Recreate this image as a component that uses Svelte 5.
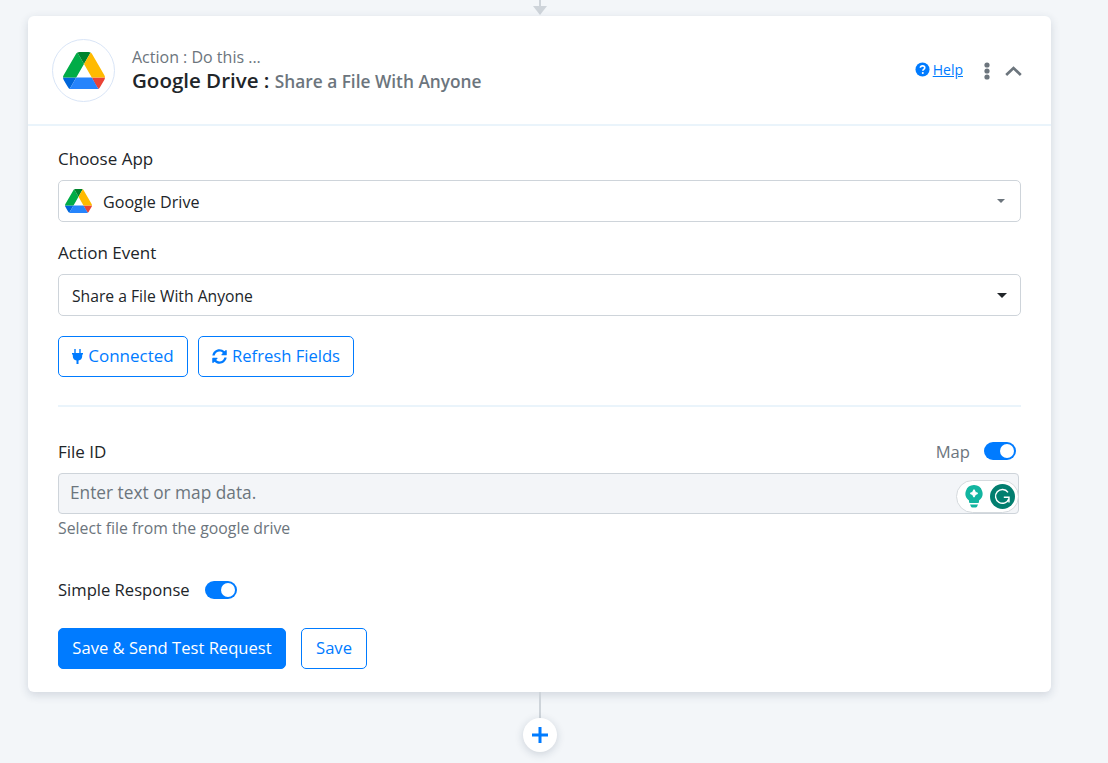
<script lang="ts">
  let fileId = $state("");
</script>

{#snippet driveLogo(size)}
  <svg width={size} height={size * 0.893} viewBox="0 0 87.3 78" aria-hidden="true">
    <path d="m6.6 66.85 3.85 6.65c.8 1.4 1.95 2.5 3.3 3.3l13.75-23.8h-27.5c0 1.55.4 3.1 1.2 4.5z" fill="#0066da" />
    <path d="m43.65 25-13.75-23.8c-1.35.8-2.5 1.9-3.3 3.3l-25.4 44a9.06 9.06 0 0 0 -1.2 4.5h27.5z" fill="#00ac47" />
    <path d="m73.55 76.8c1.35-.8 2.5-1.9 3.3-3.3l1.6-2.75 7.65-13.25c.8-1.4 1.2-2.95 1.2-4.5h-27.502l5.852 11.5z" fill="#ea4335" />
    <path d="m43.65 25 13.75-23.8c-1.35-.8-2.9-1.2-4.5-1.2h-18.5c-1.6 0-3.15.45-4.5 1.2z" fill="#00832d" />
    <path d="m59.8 53h-32.3l-13.75 23.8c1.35.8 2.9 1.2 4.5 1.2h50.8c1.6 0 3.15-.45 4.5-1.2z" fill="#2684fc" />
    <path d="m73.4 26.5-12.7-22c-.8-1.4-1.95-2.5-3.3-3.3l-13.75 23.8 16.15 28h27.45c0-1.55-.4-3.1-1.2-4.5z" fill="#ffba00" />
  </svg>
{/snippet}

<div class="page">
  <div class="flow">
    <div class="connector-top">
      <span class="line"></span>
      <span class="arrow"></span>
    </div>

    <section class="card">
      <header class="head">
        <div class="logo">{@render driveLogo(42)}</div>
        <div class="titles">
          <div class="eyebrow">Action : Do this ...</div>
          <div class="title">Google Drive : <span>Share a File With Anyone</span></div>
        </div>
        <div class="head-actions">
          <a class="help" href="#help">
            <svg width="15" height="15" viewBox="0 0 16 16" aria-hidden="true">
              <circle cx="8" cy="8" r="7.5" fill="#007bff" />
              <path d="M5.7 6.2c.1-1.4 1.1-2.1 2.4-2.1 1.4 0 2.3.8 2.3 1.9 0 1.8-2.1 1.8-2.1 3.3" fill="none" stroke="#fff" stroke-width="1.7" />
              <circle cx="8.3" cy="11.8" r="1.1" fill="#fff" />
            </svg>
            <span>Help</span>
          </a>
          <svg class="dots" width="8" height="18" viewBox="0 0 8 18" aria-hidden="true">
            <circle cx="4" cy="3" r="2.6" />
            <circle cx="4" cy="9" r="2.6" />
            <circle cx="4" cy="15" r="2.6" />
          </svg>
          <svg class="chevron" width="17" height="10" viewBox="0 0 17 10" aria-hidden="true">
            <path d="M1.2 9 8.500 2l7.300 7" fill="none" stroke="#6c757d" stroke-width="2.700" />
          </svg>
        </div>
      </header>

      <div class="body">
        <div class="label">Choose App</div>
        <div class="select">
          <span class="select-logo">{@render driveLogo(27)}</span>
          <span class="app-name">Google Drive</span>
          <span class="caret muted"></span>
        </div>

        <div class="label second">Action Event</div>
        <div class="select plain">
          <span class="event-name">Share a File With Anyone</span>
          <span class="caret"></span>
        </div>

        <div class="actions">
          <button class="btn outline connected">
            <svg width="11" height="15" viewBox="0 0 11 15" aria-hidden="true">
              <path d="M2.3 0h1.4v4h3.6V0h1.4v4H11v1.4h-.8v1.8c0 2.3-1.5 4-3.7 4.4V15h-2v-3.4C2.3 11.2.8 9.5.8 7.2V5.4H0V4h2.3z" fill="#007bff" />
            </svg>
            <span>Connected</span>
          </button>
          <button class="btn outline refresh">
            <svg width="15" height="15" viewBox="0 0 512 512" aria-hidden="true">
              <path d="M370.72 133.28C339.458 104.008 298.888 87.962 255.848 88c-77.458.068-144.328 53.178-162.791 126.85-1.344 5.363-6.122 9.15-11.651 9.15H24.103c-7.498 0-13.194-6.807-11.807-14.176C33.933 94.924 134.813 8 256 8c66.448 0 126.791 26.136 171.315 68.685L463.03 40.97C478.149 25.851 504 36.559 504 57.941V192c0 13.255-10.745 24-24 24H345.941c-21.382 0-32.09-25.851-16.971-40.971l41.75-41.749zM32 296h134.059c21.382 0 32.09 25.851 16.971 40.971l-41.75 41.75c31.262 29.273 71.835 45.319 114.876 45.28 77.418-.07 144.315-53.144 162.787-126.849 1.344-5.363 6.122-9.15 11.651-9.15h57.304c7.498 0 13.194 6.807 11.807 14.176C478.067 417.076 377.187 504 256 504c-66.448 0-126.791-26.136-171.315-68.685L48.97 471.03C33.851 486.149 8 475.441 8 454.059V320c0-13.255 10.745-24 24-24z" fill="#007bff" />
            </svg>
            <span>Refresh Fields</span>
          </button>
        </div>

        <hr />

        <div class="field-head">
          <span class="label">File ID</span>
          <span class="map">
            <span>Map</span>
            <span class="toggle"></span>
          </span>
        </div>
        <div class="input-wrap">
          <input bind:value={fileId} placeholder="Enter text or map data." />
          <div class="grammarly">
            <svg width="18" height="23" viewBox="0 0 18 23" aria-hidden="true">
              <path d="M9 0a8.5 8.5 0 0 1 5 15.4V17a1 1 0 0 1-1 1H5a1 1 0 0 1-1-1v-1.600A8.500 8.500 0 0 1 9 0z" fill="#12b5a0" />
              <path d="M5 19.500h8l-1 2.200a1.500 1.500 0 0 1-1.300.8H7.300a1.500 1.500 0 0 1-1.300-.8z" fill="#12b5a0" />
              <path d="M9 4.500c.5 2.400 1.300 3.300 3.700 3.800-2.400.5-3.200 1.400-3.700 3.800-.5-2.400-1.300-3.300-3.700-3.800 2.400-.5 3.200-1.400 3.700-3.800z" fill="#fff" stroke="#fff" stroke-width="1.200" />
            </svg>
            <svg width="25" height="25" viewBox="0 0 25 25" aria-hidden="true">
              <circle cx="12.500" cy="12.500" r="12.500" fill="#027e6f" />
              <path d="M18 8.300A6.900 6.900 0 1 0 19 14.500M13.800 13.300h5.200v5.200" fill="none" stroke="#fff" stroke-width="1.400" />
            </svg>
          </div>
        </div>
        <div class="hint">Select file from the google drive</div>

        <div class="simple">
          <span class="label">Simple Response</span>
          <span class="toggle"></span>
        </div>

        <div class="actions submit">
          <button class="btn primary">Save &amp; Send Test Request</button>
          <button class="btn outline save">Save</button>
        </div>
      </div>
    </section>

    <div class="connector-bottom">
      <span class="line"></span>
      <button class="add" aria-label="Add step">
        <svg width="16" height="16" viewBox="0 0 16 16" aria-hidden="true">
          <path d="M8 0v16M0 8h16" stroke="#007bff" stroke-width="3" />
        </svg>
      </button>
    </div>
  </div>
</div>

<style>
  :global(body) {
    margin: 0;
    background: #f3f6f9;
    overflow: hidden;
  }

  .page {
    height: 763px;
    padding-left: 28px;
    font-family: "Open Sans", "Noto Sans", sans-serif;
    font-size: 16.6px;
    color: #212529;
    overflow: hidden;
  }

  .flow {
    width: 1023px;
    display: flex;
    flex-direction: column;
    align-items: center;
  }

  .connector-top {
    height: 16px;
    display: flex;
    flex-direction: column;
    align-items: center;
  }

  .connector-top .line {
    width: 2px;
    height: 6px;
    background: #ced4da;
  }

  .connector-top .arrow {
    width: 0;
    height: 0;
    border-left: 7.5px solid transparent;
    border-right: 7.5px solid transparent;
    border-top: 9px solid #ced4da;
  }

  .card {
    width: 100%;
    height: 676px;
    background: #fff;
    border-radius: 6px;
    box-shadow: 0 3px 10px rgba(30, 50, 80, 0.16);
  }

  .head {
    height: 108px;
    box-sizing: content-box;
    border-bottom: 2px solid #eaf4fb;
    padding: 0 29px 0 24px;
    display: flex;
    align-items: center;
    gap: 17px;
  }

  .logo {
    width: 61px;
    height: 61px;
    border: 1px solid #d9e5f7;
    border-radius: 50%;
    display: flex;
    align-items: center;
    justify-content: center;
    margin-top: 1px;
  }

  .titles {
    margin-top: 2px;
  }

  .eyebrow {
    color: #6c757d;
    font-size: 16px;
    line-height: 20px;
  }

  .title {
    font-size: 20.500px;
    font-weight: 600;
    line-height: 27px;
    color: #212529;
  }

  .title span {
    font-size: 17.300px;
    color: #6c757d;
  }

  .head-actions {
    margin-left: auto;
    margin-top: 2px;
    display: flex;
    align-items: center;
  }

  .help {
    display: flex;
    align-items: center;
    gap: 3px;
    color: #007bff;
    font-size: 14px;
    margin-right: 20px;
    padding-bottom: 3px;
  }

  .dots {
    fill: #6c757d;
    margin-right: 14px;
  }

  .body {
    padding: 21px 30px 0;
  }

  .label {
    font-size: 17px;
    line-height: 24px;
    color: #212529;
  }

  .label.second {
    margin-top: 19px;
  }

  .select {
    box-sizing: border-box;
    height: 42px;
    margin-top: 9px;
    border: 1px solid #ced4da;
    border-radius: 5px;
    padding: 0 14px 0 6px;
    display: flex;
    align-items: center;
    gap: 11px;
  }

  .select.plain {
    padding-left: 13px;
  }

  .select-logo {
    display: flex;
  }

  .app-name,
  .event-name {
    font-size: 16.100px;
    padding-top: 2px;
  }

  .event-name {
    font-size: 15.700px;
  }

  .caret {
    margin-left: auto;
    margin-right: -1px;
    border-left: 5px solid transparent;
    border-right: 5px solid transparent;
    border-top: 5px solid #212529;
  }

  .caret.muted {
    margin-right: 1px;
    border-left-width: 4px;
    border-right-width: 4px;
    border-top: 4px solid #6c757d;
  }

  .actions {
    display: flex;
    gap: 10px;
    margin-top: 20px;
  }

  .btn {
    box-sizing: border-box;
    height: 41px;
    border-radius: 5px;
    font: inherit;
    padding: 0 0 2px;
    display: inline-flex;
    align-items: center;
    justify-content: center;
    gap: 5px;
  }

  .btn svg {
    margin-top: 2px;
  }

  .outline {
    background: #fff;
    border: 1px solid #007bff;
    color: #007bff;
  }

  .connected {
    width: 130px;
    font-size: 17px;
  }

  .refresh {
    width: 156px;
  }

  .primary {
    background: #007bff;
    border: 1px solid #007bff;
    color: #fff;
    width: 228px;
  }

  .save {
    width: 66px;
  }

  hr {
    border: 0;
    border-top: 2px solid #eaf4fb;
    margin: 28px 0 0;
  }

  .field-head {
    margin-top: 33px;
    height: 24px;
    display: flex;
    align-items: center;
    justify-content: space-between;
  }

  .map {
    display: flex;
    align-items: center;
    gap: 14px;
    color: #6c757d;
    margin: -2px 5px 0 0;
  }

  .toggle {
    width: 32px;
    height: 18px;
    border-radius: 9px;
    background: #007bff;
    display: inline-flex;
    align-items: center;
    justify-content: flex-end;
    padding-right: 2px;
    box-sizing: border-box;
  }

  .toggle::after {
    content: "";
    width: 14px;
    height: 14px;
    border-radius: 50%;
    background: #fff;
  }

  .input-wrap {
    position: relative;
    margin-top: 9px;
    width: 961px;
  }

  input {
    box-sizing: border-box;
    display: block;
    width: 100%;
    height: 41px;
    border: 1px solid #ced4da;
    border-radius: 4px;
    background: #f3f5f8;
    padding: 0 11px 2px;
    font: inherit;
    font-size: 17.300px;
    outline: none;
  }

  input::placeholder {
    color: #6c757d;
    opacity: 1;
  }

  .grammarly {
    position: absolute;
    top: 7px;
    right: 0;
    box-sizing: border-box;
    width: 63px;
    height: 33px;
    border: 1px solid #d5dade;
    border-radius: 17px;
    background: #fff;
    display: flex;
    align-items: center;
    justify-content: flex-end;
    gap: 7px;
    padding-right: 3px;
  }

  .hint {
    margin-top: 4px;
    color: #6c757d;
    font-size: 15.800px;
    line-height: 21px;
  }

  .simple {
    margin-top: 39px;
    display: flex;
    align-items: center;
    gap: 15px;
  }

  .simple .label {
    font-size: 16.600px;
  }

  .submit {
    margin-top: 26px;
    gap: 15px;
  }

  .connector-bottom {
    display: flex;
    flex-direction: column;
    align-items: center;
  }

  .connector-bottom .line {
    width: 2px;
    height: 27px;
    background: #ced4da;
  }

  .add {
    width: 34px;
    height: 34px;
    margin-top: -1px;
    border: 0;
    border-radius: 50%;
    background: #fff;
    box-shadow: 0 2px 8px rgba(30, 50, 80, 0.18);
    display: flex;
    align-items: center;
    justify-content: center;
    padding: 0;
  }
</style>
